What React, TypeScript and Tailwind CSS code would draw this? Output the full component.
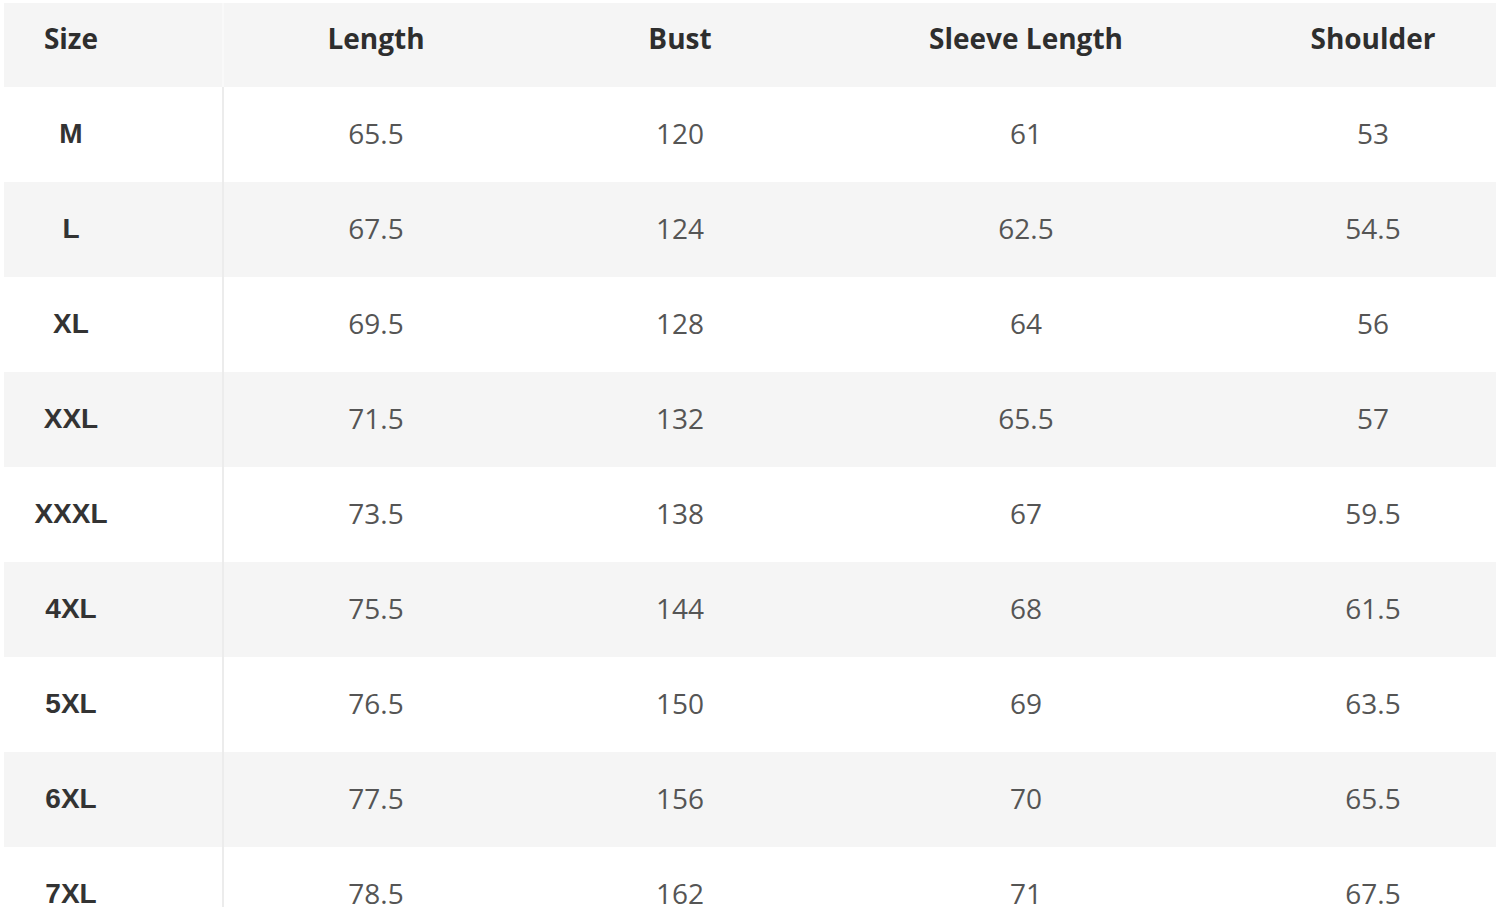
const rows: [string, string, string, string, string][] = [
  ["M", "65.5", "120", "61", "53"],
  ["L", "67.5", "124", "62.5", "54.5"],
  ["XL", "69.5", "128", "64", "56"],
  ["XXL", "71.5", "132", "65.5", "57"],
  ["XXXL", "73.5", "138", "67", "59.5"],
  ["4XL", "75.5", "144", "68", "61.5"],
  ["5XL", "76.5", "150", "69", "63.5"],
  ["6XL", "77.5", "156", "70", "65.5"],
  ["7XL", "78.5", "162", "71", "67.5"],
]

const cols = "grid w-[1492px] grid-cols-[220px_304px_304px_388px_276px]"

export default function App() {
  return (
    <div className="h-[907px] w-[1500px] overflow-hidden bg-white pt-[3px] pl-[4px]">
      {/* Header */}
      <div
        className={`${cols} h-[84px] bg-[#f5f5f5] text-[28px] font-bold text-[#2e2e2e]`}
        style={{ fontFamily: '"Open Sans", "Noto Sans", sans-serif' }}
      >
        <div className="flex items-center justify-center pr-[84px] pb-[14px] border-r-2 border-[#f9f9f9]">Size</div>
        <div className="flex items-center justify-center pb-[14px]">Length</div>
        <div className="flex items-center justify-center pb-[14px]">Bust</div>
        <div className="flex items-center justify-center pb-[14px]">Sleeve Length</div>
        <div className="flex items-center justify-center pl-[30px] pb-[14px]">Shoulder</div>
      </div>

      {/* Body */}
      {rows.map((r, i) => (
        <div
          key={r[0]}
          className={`${cols} h-[95px] text-[28px] ${i % 2 === 1 ? "bg-[#f5f5f5]" : "bg-white"}`}
        >
          <div
            className="flex items-center justify-center pr-[84px] pb-[2px] border-r-2 border-[#ececec] font-bold text-[#333]"
            style={{ fontFamily: '"Liberation Sans", Arial, sans-serif' }}
          >
            {r[0]}
          </div>
          {r.slice(1).map((v, j) => (
            <div
              key={j}
              className={`flex items-center justify-center pb-[3px] text-[#555] ${j === 3 ? "pl-[30px]" : ""}`}
              style={{ fontFamily: '"Open Sans", "Noto Sans", sans-serif' }}
            >
              {v}
            </div>
          ))}
        </div>
      ))}
    </div>
  )
}
